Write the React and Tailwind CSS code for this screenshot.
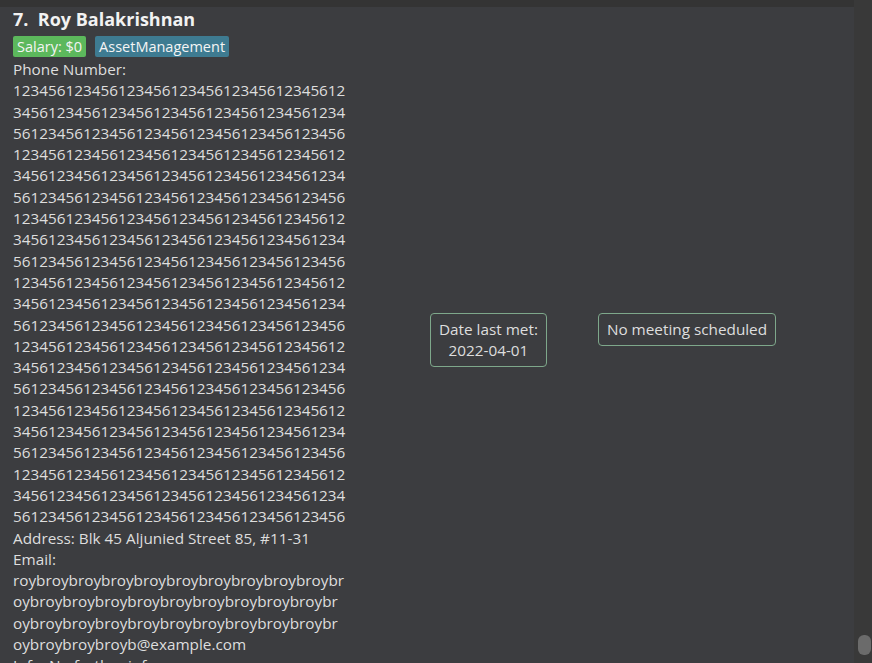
const phoneLines = [];
for (let i = 0; i < 21; i++) {
  const pattern = ["12345612345612345612345612345612345612", "34561234561234561234561234561234561234", "56123456123456123456123456123456123456"];
  phoneLines.push(pattern[i % 3]);
}

const emailLines = [
  "roybroybroybroybroybroybroybroybroybroybr",
  "oybroybroybroybroybroybroybroybroybroybr",
  "oybroybroybroybroybroybroybroybroybroybr",
  "oybroybroybroyb@example.com",
];

function App() {
  return (
    <div
      className="flex h-[663px] w-[872px] overflow-hidden bg-[#343434] text-[#dedede]"
      style={{ fontFamily: '"Open Sans", "Noto Sans", sans-serif' }}
    >
      <div className="flex-1 pt-[7px]">
        <div className="flex h-full bg-[#3c3d40] pl-[13px]">
          <div className="w-[417px] shrink-0">
            <h1 className="text-[18px] font-bold leading-[24px] text-[#f2f2f2]">
              7.&nbsp;&nbsp;Roy Balakrishnan
            </h1>
            <div className="mt-[5px] flex gap-[9px] text-[14.5px] leading-[21px] text-[#f4f4f4]">
              <span className="rounded-[2px] bg-[#5cb85c] px-[4px]">Salary: $0</span>
              <span className="rounded-[2px] bg-[#3e7b91] px-[4px]">AssetManagement</span>
            </div>
            <div className="mt-[2px] text-[15.3px] leading-[21.3px]">
              <p>Phone Number:</p>
              {phoneLines.map((line, i) => (
                <p key={i}>{line}</p>
              ))}
              <p>Address: Blk 45 Aljunied Street 85, #11-31</p>
              <p>Email:</p>
              {emailLines.map((line, i) => (
                <p key={i}>{line}</p>
              ))}
              <p>Info: No further info</p>
            </div>
          </div>
          <div className="mt-[306px] flex items-start gap-[51px] text-[15.3px] leading-[21px]">
            <div className="rounded-[4px] border border-[#7ea88b] px-[8px] py-[5px] text-center">
              <p>Date last met:</p>
              <p>2022-04-01</p>
            </div>
            <div className="rounded-[4px] border border-[#7ea88b] px-[8px] py-[5px] text-center">
              <p>No meeting scheduled</p>
            </div>
          </div>
        </div>
      </div>
      <div className="flex w-[18px] flex-col justify-end bg-[#393939] pb-[8px] pl-[4px] pr-[1px]">
        <div className="h-[20px] rounded-[6px] bg-[#6b6b6b]" />
      </div>
    </div>
  );
}

export default App;
